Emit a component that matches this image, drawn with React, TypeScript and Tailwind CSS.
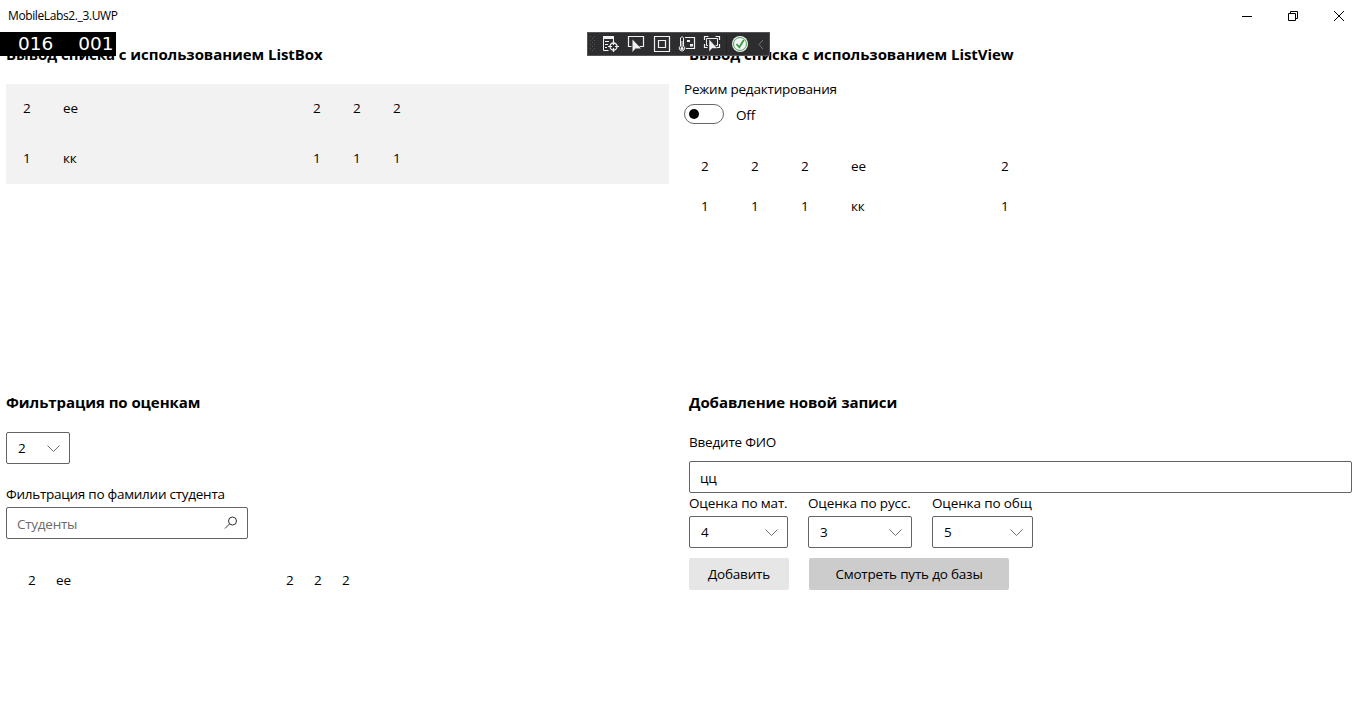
import type { ReactNode } from 'react';

const rowsBox = [['2', 'ее', '2', '2', '2'], ['1', 'кк', '1', '1', '1']];
const rowsView = [['2', '2', '2', 'ее', '2'], ['1', '1', '1', 'кк', '1']];

function Chevron() {
  return (
    <svg className="h-[7px] w-[13px]" viewBox="0 0 13 7" fill="none" stroke="#6f6f6f">
      <path d="M.5 .5l6 6 6-6" />
    </svg>
  );
}

function Combo({ value, className }: { value: string; className: string }) {
  return (
    <button className={`flex h-8 items-center justify-between rounded-[2px] border border-[#636363] pr-[9px] pl-[11px] ${className}`}>
      <span>{value}</span>
      <Chevron />
    </button>
  );
}

function Heading({ children, className }: { children: ReactNode; className: string }) {
  return <h2 className={`h-6 text-[15px] leading-6 font-bold tracking-[-0.065px] whitespace-nowrap ${className}`}>{children}</h2>;
}

function TitleBar() {
  return (
    <header className="flex h-8 items-center justify-between pl-2">
      <span className="text-[12px] leading-4 tracking-[-0.38px]">MobileLabs2._3.UWP</span>
      <div className="flex h-8">
        <button className="flex w-[46px] items-center justify-center">
          <svg width="10" height="10" stroke="#000"><path d="M0 5.5h10" /></svg>
        </button>
        <button className="flex w-[46px] items-center justify-center">
          <svg width="10" height="10" fill="none" stroke="#000"><path d="M.5 2.5h7v7h-7zM2.5 2.5v-2h7v7h-2" /></svg>
        </button>
        <button className="flex w-[45px] items-center justify-center">
          <svg width="10" height="10" stroke="#000"><path d="M0 0l10 10M10 0L0 10" /></svg>
        </button>
      </div>
    </header>
  );
}

function DebugBar() {
  return (
    <div className="absolute top-8 left-[587px] z-10 h-6 w-[183px]">
      <svg width="183" height="24" fill="none" stroke="#f0f0f0">
        <rect x=".5" y=".5" width="182" height="23" fill="#2d2d30" stroke="#555" />
        <path d="M3.5 4v16M7.5 4v16" stroke="#55555a" strokeDasharray="1 3" />
        <path d="M5.5 6v14" stroke="#55555a" strokeDasharray="1 3" />
        <path d="M16 4h11v3H16z" fill="#f0f0f0" stroke="none" />
        <path d="M16.5 6v12.5h5M26.5 6v3M18 9.5h4M18 12.5h3M18 15.5h2" />
        <circle cx="26.5" cy="14.5" r="3.5" strokeWidth="1.3" />
        <path d="M26.5 9v4M26.5 16v4M21 14.5h4M28 14.5h4" strokeWidth="1.2" />
        <path d="M44.5 14.5h-3v-10h15v10h-4" strokeWidth="1.2" />
        <path d="M45.5 7.5v12.5l3-3.5h5.5z" fill="#f0f0f0" stroke="none" />
        <path d="M67.5 4.5h15v15h-15zM71.5 8.5h7v7h-7z" strokeWidth="1.2" />
        <path d="M93.5 14V6q1.5-3 3 0v8a2.7 2.7 0 1 1-3 0z" />
        <path d="M95 9v7" /><circle cx="95" cy="16.5" r="1.5" fill="#f0f0f0" stroke="none" />
        <path d="M98 5.5h9.5v11H99" strokeWidth="1.2" />
        <path d="M100 8h3v2h-3zM103 12h3v2.5h-3z" fill="#f0f0f0" stroke="none" />
        <path d="M117.5 8V4.5h4M128.5 4.5h4V8M132.5 12v3.5h-4M117.5 12v3.5h3" strokeWidth="1.2" />
        <path d="M121 13.5h-1.500V6.500h11v7h-2" />
        <path d="M122 7v13l3-3.500h5.500z" fill="#f0f0f0" stroke="#2d2d30" strokeWidth=".5" />
        <path d="M139.5 3v18" stroke="#222" />
        <circle cx="153" cy="12" r="8" fill="#f4f4f4" stroke="none" />
        <circle cx="153" cy="12" r="6.5" stroke="#4ba652" />
        <path d="M149.5 12l2.800 3.300 4.500-7.300" stroke="#389b40" strokeWidth="1.8" />
        <path d="M176 8l-4 4.500 4 4.500" stroke="#777" />
      </svg>
    </div>
  );
}

export default function App() {
  return (
    <div className="relative h-[725px] w-[1361px] overflow-hidden bg-white font-['Open_Sans','Noto_Sans',sans-serif] text-[13.5px] leading-5 tracking-[-0.2px] text-black">
      <TitleBar />
      <div className="absolute top-8 left-0 z-10 flex h-6 w-[116px] gap-[25px] bg-black pl-[18px] font-['DejaVu_Sans',sans-serif] text-[18.5px] leading-[23px] tracking-normal text-white">
        <span>016</span><span>001</span>
      </div>
      <DebugBar />
      <main className="grid grid-cols-[663px_669px] grid-rows-[348px_345px] gap-x-[15px] pl-[6px]">
        <section className="pt-[10px]">
          <Heading className="">Вывод списка с использованием ListBox</Heading>
          <div className="mt-[18px] bg-[#f2f2f2]">
            {rowsBox.map((r, i) => (
              <div key={i} className="grid h-[50px] grid-cols-[40px_250px_40px_40px_40px] pt-[14px] pl-[17px]">
                {r.map((c, j) => <span key={j}>{c}</span>)}
              </div>
            ))}
          </div>
        </section>
        <section className="pt-[10px]">
          <Heading className="pl-[5px]">Вывод списка с использованием ListView</Heading>
          <div className="mt-[13px]">Режим редактирования</div>
          <div className="mt-[5px] flex h-5 gap-3">
            <span className="flex w-10 items-center rounded-full border border-[#666] pl-[4px]"><i className="size-[10px] rounded-full bg-black" /></span>
            <span className="mt-px">Off</span>
          </div>
          <div className="mt-[22px] pl-[17px]">
            {rowsView.map((r, i) => (
              <div key={i} className="grid h-10 grid-cols-[50px_50px_50px_150px_50px] items-center">
                {r.map((c, j) => <span key={j}>{c}</span>)}
              </div>
            ))}
          </div>
        </section>
        <section className="pt-[10px]">
          <Heading className="">Фильтрация по оценкам</Heading>
          <Combo value="2" className="mt-[18px] w-16" />
          <div className="mt-5 h-[23px] tracking-[-0.26px]">Фильтрация по фамилии студента</div>
          <div className="flex h-8 w-[242px] items-center justify-between rounded-[2px] border border-[#636363] pr-[9px] pl-[10px] text-[#6b6b6b]">
            <span className="mt-[2px] tracking-[-0.26px]">Студенты</span>
            <svg width="14" height="14" fill="none" stroke="#333"><circle cx="8.5" cy="5" r="4" /><path d="M5.5 8L1 12.5" /></svg>
          </div>
          <div className="mt-[31px] grid grid-cols-[28px_230px_28px_28px_28px] pl-[22px]">
            {['2', 'ее', '2', '2', '2'].map((c, j) => <span key={j}>{c}</span>)}
          </div>
        </section>
        <section className="pt-[10px] pl-[5px]">
          <Heading className="">Добавление новой записи</Heading>
          <div className="mt-[18px] h-[29px]">Введите ФИО</div>
          <div className="flex h-8 w-[663px] items-center rounded-[2px] border border-[#636363] pt-px pl-[10px]">цц</div>
          <div className="flex gap-5 tracking-[-0.13px]">
            <label><span className="block h-[23px] w-[99px] whitespace-nowrap">Оценка по мат.</span><Combo value="4" className="w-[99px]" /></label>
            <label><span className="block h-[23px] w-[104px] whitespace-nowrap">Оценка по русс.</span><Combo value="3" className="w-[104px]" /></label>
            <label><span className="block h-[23px] w-[101px] whitespace-nowrap">Оценка по общ</span><Combo value="5" className="w-[101px]" /></label>
          </div>
          <div className="mt-[10px] flex gap-5">
            <button className="h-8 w-[100px] rounded-[2px] bg-[#e6e6e6]">Добавить</button>
            <button className="h-8 w-[200px] rounded-[2px] bg-[#ccc]">Смотреть путь до базы</button>
          </div>
        </section>
      </main>
    </div>
  );
}
